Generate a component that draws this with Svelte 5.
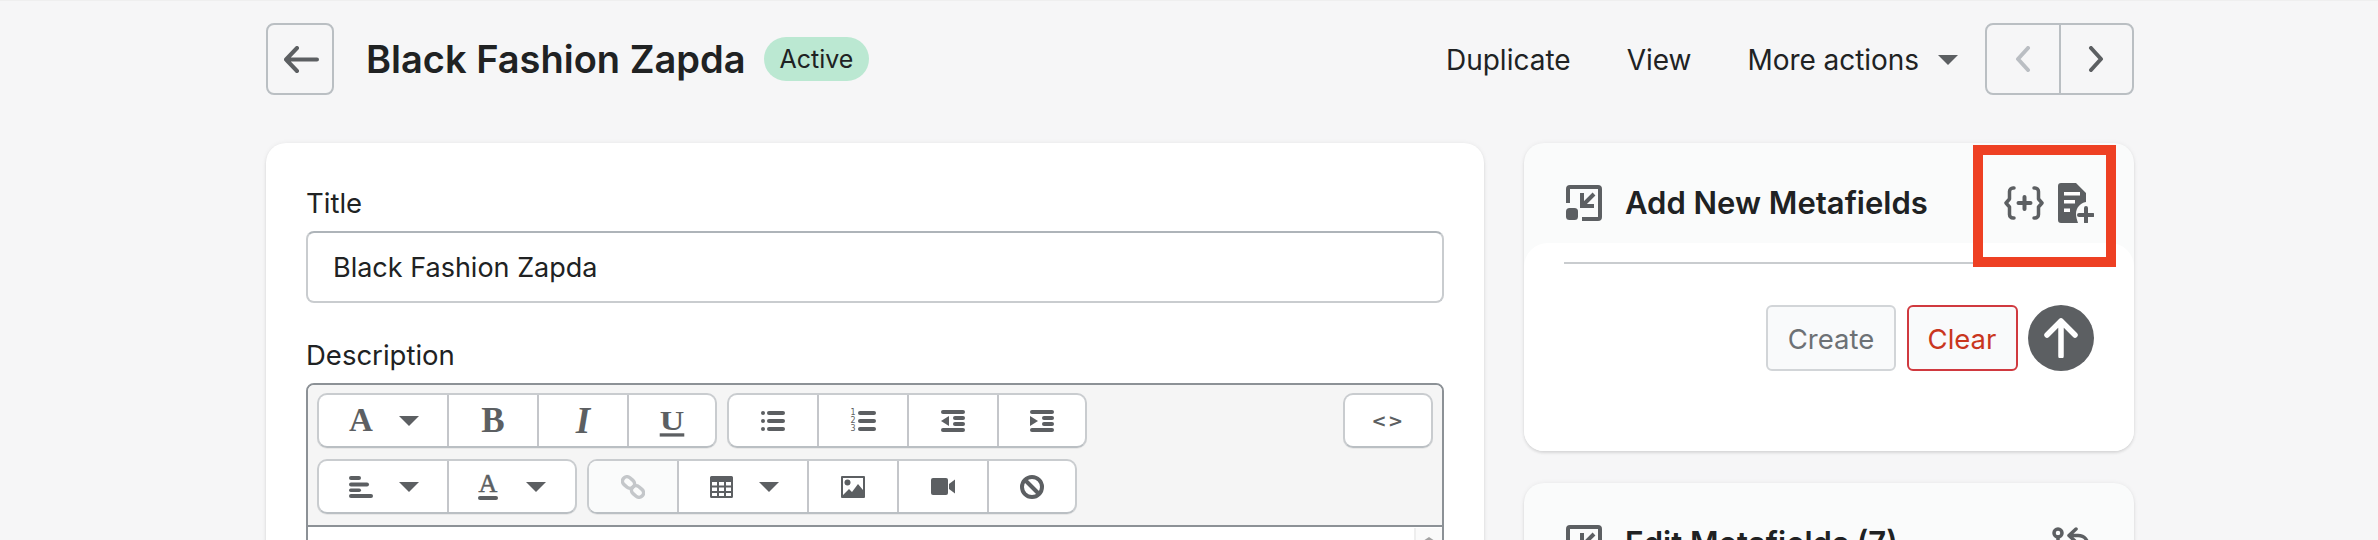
<script>
  const ink = '#5c5f62';
</script>

<div class="page">
  <header class="top">
    <button class="back" aria-label="Back">
      <svg width="35" height="27" viewBox="0 0 35 27"><path d="M13 2 2 13.5 13 25M2 13.5h31" fill="none" stroke={ink} stroke-width="4" stroke-linecap="round" stroke-linejoin="round"/></svg>
    </button>
    <h1>Black Fashion Zapda</h1>
    <span class="badge">Active</span>
    <nav class="actions">
      <span>Duplicate</span>
      <span>View</span>
      <span class="more">More actions<svg class="more-caret" width="20" height="10" viewBox="0 0 20 10"><path d="M0 0h20L10 10z" fill={ink}/></svg></span>
    </nav>
    <div class="pager">
      <button aria-label="Previous"><svg width="16" height="26" viewBox="0 0 16 26"><path d="M13 2 3 13l10 11" fill="none" stroke="#babec3" stroke-width="4" stroke-linecap="round" stroke-linejoin="round"/></svg></button>
      <button aria-label="Next"><svg width="16" height="26" viewBox="0 0 16 26"><path d="m3 2 10 11L3 24" fill="none" stroke={ink} stroke-width="4" stroke-linecap="round" stroke-linejoin="round"/></svg></button>
    </div>
  </header>

  <div class="columns">
    <section class="card main">
      <div class="label">Title</div>
      <div class="input">Black Fashion Zapda</div>
      <div class="label desc">Description</div>
      <div class="editor">
        <div class="toolbar">
          <div class="row">
            <div class="group g400">
              <div class="tb w130"><span class="serif-a">A</span><svg class="caret" viewBox="0 0 20 10"><path d="M0 0h20L10 10z"/></svg></div>
              <div class="tb"><span class="serif-b">B</span></div>
              <div class="tb"><span class="serif-i">I</span></div>
              <div class="tb"><span class="serif-u">U</span></div>
            </div>
            <div class="group g360">
              <div class="tb"><svg class="ic" width="24" height="20" viewBox="0 0 24 20"><circle cx="2" cy="2" r="2"/><circle cx="2" cy="10" r="2"/><circle cx="2" cy="18" r="2"/><rect x="6" width="18" height="4" y="0" rx="2"/><rect x="6" width="18" height="4" y="8" rx="2"/><rect x="6" width="18" height="4" y="16" rx="2"/></svg></div>
              <div class="tb"><div class="numbered"><span class="digits"><i>1</i><i>2</i><i>3</i></span><svg class="ic" width="18" height="20" viewBox="0 0 18 20"><rect width="18" height="4" y="0" rx="2"/><rect width="18" height="4" y="8" rx="2"/><rect width="18" height="4" y="16" rx="2"/></svg></div></div>
              <div class="tb"><svg class="ic" width="24" height="22" viewBox="0 0 24 22"><rect width="24" height="4" rx="2"/><rect y="18" width="24" height="4" rx="2"/><rect x="12" y="6" width="12" height="4" rx="2"/><rect x="12" y="12" width="12" height="4" rx="2"/><path d="M8 6v10L0 11z"/></svg></div>
              <div class="tb"><svg class="ic" width="24" height="22" viewBox="0 0 24 22"><rect width="24" height="4" rx="2"/><rect y="18" width="24" height="4" rx="2"/><rect x="12" y="6" width="12" height="4" rx="2"/><rect x="12" y="12" width="12" height="4" rx="2"/><path d="M0 6v10l8-5z"/></svg></div>
            </div>
            <div class="group g90 code"><div class="tb"><span class="code-text">&lt;&gt;</span></div></div>
          </div>
          <div class="row">
            <div class="group g260">
              <div class="tb w130"><svg class="ic" width="24" height="22" viewBox="0 0 24 22"><rect width="12" height="4" rx="2"/><rect y="6.500" width="20" height="4" rx="2"/><rect y="12.500" width="12" height="3.500" rx="1.700"/><rect y="18" width="24" height="4" rx="2"/></svg><svg class="caret" viewBox="0 0 20 10"><path d="M0 0h20L10 10z"/></svg></div>
              <div class="tb"><span class="color-a"><span class="color-a-letter">A</span><span class="color-a-bar"></span></span><svg class="caret" viewBox="0 0 20 10"><path d="M0 0h20L10 10z"/></svg></div>
            </div>
            <div class="group g490">
              <div class="tb off"><svg width="24" height="24" viewBox="0 0 24 24"><g fill="none" stroke="#c4c7ca" stroke-width="3.500"><rect x="1" y="3" width="13" height="9" rx="4.500" transform="rotate(40 7.500 7.500)"/><rect x="10" y="12" width="13" height="9" rx="4.500" transform="rotate(40 16.500 16.500)"/></g></svg></div>
              <div class="tb w130"><svg class="ic" width="23" height="22" viewBox="0 0 23 22"><path fill-rule="evenodd" d="M1.500 0h20A1.500 1.500 0 0 1 23 1.500v19a1.500 1.500 0 0 1-1.500 1.500h-20A1.500 1.500 0 0 1 0 20.500v-19A1.500 1.500 0 0 1 1.500 0zM2 6v3.500h5V6zm7 0v3.500h5V6zm7 0v3.500h5V6zM2 11.500V15h5v-3.500zm7 0V15h5v-3.500zm7 0V15h5v-3.500zM2 17v3h5v-3zm7 0v3h5v-3zm7 0v3h5v-3z"/></svg><svg class="caret" viewBox="0 0 20 10"><path d="M0 0h20L10 10z"/></svg></div>
              <div class="tb"><svg class="ic" width="24" height="22" viewBox="0 0 24 22"><path fill-rule="evenodd" d="M1 0h22a1 1 0 0 1 1 1v20a1 1 0 0 1-1 1H1a1 1 0 0 1-1-1V1a1 1 0 0 1 1-1zm1 2v17l6-6 3 3 6-8 5 6V2z"/><circle cx="6.500" cy="6.500" r="3"/></svg></div>
              <div class="tb"><svg class="ic" width="24" height="17" viewBox="0 0 24 17"><rect width="17" height="17" rx="2"/><path d="m18 6 6-4.500v14L18 11z"/></svg></div>
              <div class="tb"><svg width="24" height="24" viewBox="0 0 24 24"><g fill="none" stroke={ink} stroke-width="4"><circle cx="12" cy="12" r="10"/><path d="m5 5 14 14"/></g></svg></div>
            </div>
          </div>
        </div>
        <div class="content"><div class="scroll"><span class="scroll-arrow"></span></div></div>
      </div>
    </section>

    <aside class="side">
      <section class="card panel add">
        <div class="panel-head">
          <svg class="collapse" width="36" height="36" viewBox="0 0 36 36"><g fill="none" stroke={ink} stroke-width="4"><path d="M2 18V4a2 2 0 0 1 2-2h28a2 2 0 0 1 2 2v28a2 2 0 0 1-2 2H16"/><path d="M16 8v13h12M16.500 20.500 28 9"/></g><rect y="23" width="12" height="12" rx="3.500" fill={ink}/></svg>
          <h2>Add New Metafields</h2>
          <div class="head-icons">
            <svg width="40" height="34" viewBox="0 0 40 34"><g fill="none" stroke={ink} stroke-width="3.500" stroke-linecap="round" stroke-linejoin="round"><path d="M10 2H9a3.500 3.500 0 0 0-3.500 3.500V13L2 17l3.500 4v7.500A3.500 3.500 0 0 0 9 32h1"/><path d="M30 2h1a3.500 3.500 0 0 1 3.500 3.500V13l3.500 4-3.500 4v7.500A3.500 3.500 0 0 1 31 32h-1"/><path d="M20.500 11v12M14.500 17h12" stroke-width="4"/></g></svg>
            <svg width="36" height="40" viewBox="0 0 36 40"><path d="M3 0h15l10 10v9c-6 1-10 6-10 12 0 3 1 6 2 9H3c-2 0-3-1-3-3V3c0-2 1-3 3-3z" fill={ink}/><path d="M6 9h16v3.500H6zM6 17h11v3.500H6zM6 25.500h6V29H6z" fill="#fff"/><path d="M28 25v14M21 32h14" stroke={ink} stroke-width="4" stroke-linecap="round"/></svg>
          </div>
        </div>
        <div class="panel-body">
          <hr />
          <div class="btns">
            <span class="btn create">Create</span>
            <span class="btn clear">Clear</span>
            <span class="up"><svg width="34" height="40" viewBox="0 0 34 40"><path d="M17 38V3M3 17 17 3l14 14" fill="none" stroke="#fff" stroke-width="5.500" stroke-linecap="round" stroke-linejoin="round"/></svg></span>
          </div>
        </div>
        <div class="highlight"></div>
      </section>

      <section class="card panel">
        <div class="panel-head">
          <svg class="collapse" width="36" height="36" viewBox="0 0 36 36"><g fill="none" stroke={ink} stroke-width="4"><path d="M2 18V4a2 2 0 0 1 2-2h28a2 2 0 0 1 2 2v28a2 2 0 0 1-2 2H16"/><path d="M16 8v13h12M16.500 20.500 28 9"/></g><rect y="23" width="12" height="12" rx="3.500" fill={ink}/></svg>
          <h2>Edit Metafields (7)</h2>
          <div class="head-icons revert">
            <svg width="38" height="36" viewBox="0 0 38 36"><g fill="none" stroke={ink} stroke-width="3.500" stroke-linecap="round" stroke-linejoin="round"><circle cx="6" cy="6" r="4"/><path d="M6 10v20"/><path d="M24 2 17 8.500l7 6.500M18 8.500h8c7 0 10 5 10 11v6"/></g></svg>
          </div>
        </div>
      </section>
    </aside>
  </div>
</div>

<style>
  :global(body) { margin: 0; background: #f6f6f7; }
  .page {
    box-sizing: border-box;
    width: 2378px;
    height: 540px;
    overflow: hidden;
    padding: 23px 244px 0 266px;
    background: #f6f6f7;
    font-family: Inter, "Liberation Sans", sans-serif;
    font-size: 27.500px;
    color: #202223;
    box-shadow: inset 0 1px 0 #efefef;
  }
  button { padding: 0; margin: 0; background: none; font: inherit; }
  .top { display: flex; align-items: center; height: 72px; margin-bottom: 48px; }
  .back {
    box-sizing: border-box;
    width: 68px;
    height: 72px;
    border: 2px solid #babfc3;
    border-radius: 8px;
    display: flex;
    align-items: center;
    justify-content: center;
    padding-left: 2px;
  }
  h1 { margin: 0 0 0 32px; font-size: 38px; line-height: 44px; font-weight: 600; }
  .badge {
    margin-left: 18px;
    height: 44px;
    line-height: 44px;
    padding: 0 16px;
    border-radius: 22px;
    background: #bbe8d2;
    font-size: 25px;
  }
  .actions { margin-left: auto; padding-top: 1px; display: flex; align-items: center; gap: 56px; font-size: 28px; }
  .more { display: flex; align-items: center; letter-spacing: -0.05px; }
  .more-caret { margin-left: 19px; }
  .pager {
    box-sizing: border-box;
    margin-left: 27px;
    width: 149px;
    height: 72px;
    border: 2px solid #babfc3;
    border-radius: 8px;
    display: flex;
  }
  .pager button {
    flex: 1;
    border: 0;
    display: flex;
    align-items: center;
    justify-content: center;
  }
  .pager button:first-child { border-right: 2px solid #babfc3; }

  .columns { display: grid; grid-template-columns: 1218px 610px; gap: 40px; align-items: start; }
  .card {
    background: #fff;
    border-radius: 20px;
    box-shadow: 0 0 5px rgba(23, 24, 24, 0.06), 0 2px 3px rgba(0, 0, 0, 0.1);
  }
  .main { padding: 40px 40px 40px; }
  .label { line-height: 40px; margin-bottom: 8px; }
  .desc { margin-top: 32px; }
  .input {
    box-sizing: border-box;
    height: 72px;
    line-height: 70px;
    padding: 0 25px;
    font-size: 27px;
    border: 2px solid #c9cccf;
    border-top-color: #aeb4b9;
    border-radius: 8px;
  }
  .editor { border: 2px solid #8c9196; border-radius: 8px; overflow: hidden; }
  .toolbar {
    background: #f5f5f5;
    border-bottom: 2px solid #8c9196;
    padding: 8px 9px 11px;
    display: flex;
    flex-direction: column;
    gap: 11px;
  }
  .row { display: flex; gap: 10px; }
  .group {
    box-sizing: border-box;
    height: 55px;
    display: flex;
    background: #fff;
    border: 2px solid #c9cccf;
    border-bottom-color: #babfc3;
    border-radius: 10px;
    overflow: hidden;
    box-shadow: 0 1px 0 rgba(0, 0, 0, 0.05);
  }
  .g400 { width: 400px; }
  .g360 { width: 360px; }
  .g260 { width: 260px; }
  .g490 { width: 490px; }
  .g90 { width: 90px; }
  .code { margin-left: auto; }
  .tb {
    box-sizing: border-box;
    width: 90px;
    display: flex;
    align-items: center;
    justify-content: center;
    border-right: 2px solid #c4c6ca;
  }
  .tb:last-child { border-right: 0; flex: 1; }
  .w130 { width: 130px; gap: 26px; padding-left: 2px; }
  .group > .tb:nth-child(2):has(.color-a) { gap: 28px; }
  .off { background: #fafbfb; }
  .caret { width: 20px; height: 10px; fill: #5c5f62; }
  .ic { fill: #5c5f62; display: block; }
  .serif-a, .serif-b, .serif-i, .serif-u, .color-a-letter {
    font-family: "Liberation Serif", serif;
    color: #5c5f62;
    line-height: 1;
  }
  .serif-a { font-size: 33px; font-weight: 700; width: 24px; }
  .serif-b { font-size: 35px; font-weight: 700; }
  .serif-i { font-size: 37px; font-weight: 700; font-style: italic; }
  .serif-u {
    display: inline-block;
    font-size: 34px;
    font-weight: 700;
    text-decoration: underline;
    text-decoration-thickness: 4px;
    text-underline-offset: 4px;
    transform: scaleY(0.82);
  }
  .color-a { display: flex; flex-direction: column; align-items: center; width: 20px; }
  .color-a-letter { font-size: 26px; font-weight: 400; line-height: 22px; -webkit-text-stroke: 0.5px #5c5f62; }
  .color-a-bar { width: 20px; height: 4px; border-radius: 2px; background: #5c5f62; margin-top: 1px; }
  .numbered { display: flex; align-items: center; gap: 2px; }
  .digits {
    display: flex;
    flex-direction: column;
    align-items: center;
    font-size: 8px;
    line-height: 8px;
    width: 6px;
    color: #5c5f62;
    font-family: "DejaVu Sans", sans-serif;
  }
  .digits i { font-style: normal; }
  .code-text { font-family: "DejaVu Sans", sans-serif; font-weight: 700; font-size: 18px; letter-spacing: 1.500px; color: #5c5f62; }
  .content { height: 40px; background: #fff; display: flex; justify-content: flex-end; margin-top: 1px; }
  .scroll {
    box-sizing: border-box;
    width: 28px;
    background: #fafafa;
    border-left: 2px solid #eeeeee;
    display: flex;
    justify-content: center;
    padding-top: 9px;
  }
  .scroll-arrow { width: 0; height: 0; border: 6px solid transparent; border-top: 0; border-bottom: 4px solid #a3a3a3; }

  .side { display: flex; flex-direction: column; gap: 32px; }
  .panel { background: #fafbfb; position: relative; }
  .panel-head { display: flex; height: 100px; padding: 42px 40px 0 42px; box-sizing: border-box; align-items: flex-start; }
  .collapse { flex: none; }
  h2 { margin: 0 0 0 23px; font-size: 31px; line-height: 36px; font-weight: 600; flex: 1; }
  .head-icons { display: flex; align-items: center; gap: 14px; margin-top: -2px; height: 40px; }
  .revert { margin-top: 0; margin-right: 4px; }
  .panel-body {
    box-sizing: border-box;
    height: 208px;
    background: #fff;
    border-radius: 24px 24px 20px 20px;
    padding: 19px 40px 0 40px;
  }
  hr { margin: 0 0 41px; border: 0; height: 2px; background: #c9cccf; }
  .btns { display: flex; justify-content: flex-end; gap: 10.500px; }
  .btn {
    box-sizing: border-box;
    height: 66px;
    line-height: 64px;
    border: 2px solid;
    border-radius: 6px;
    background: #f9fafb;
    text-align: center;
  }
  .create { width: 130px; border-color: #d2d5d8; color: #6d7175; }
  .clear { width: 111px; border-color: #d0393f; color: #c9361e; }
  .up { width: 66px; height: 66px; border-radius: 50%; background: #5c5f62; display: flex; align-items: center; justify-content: center; }
  .highlight {
    position: absolute;
    left: 449px;
    top: 2px;
    width: 143px;
    height: 122px;
    box-sizing: border-box;
    border: 10px solid #ee4023;
  }
</style>
